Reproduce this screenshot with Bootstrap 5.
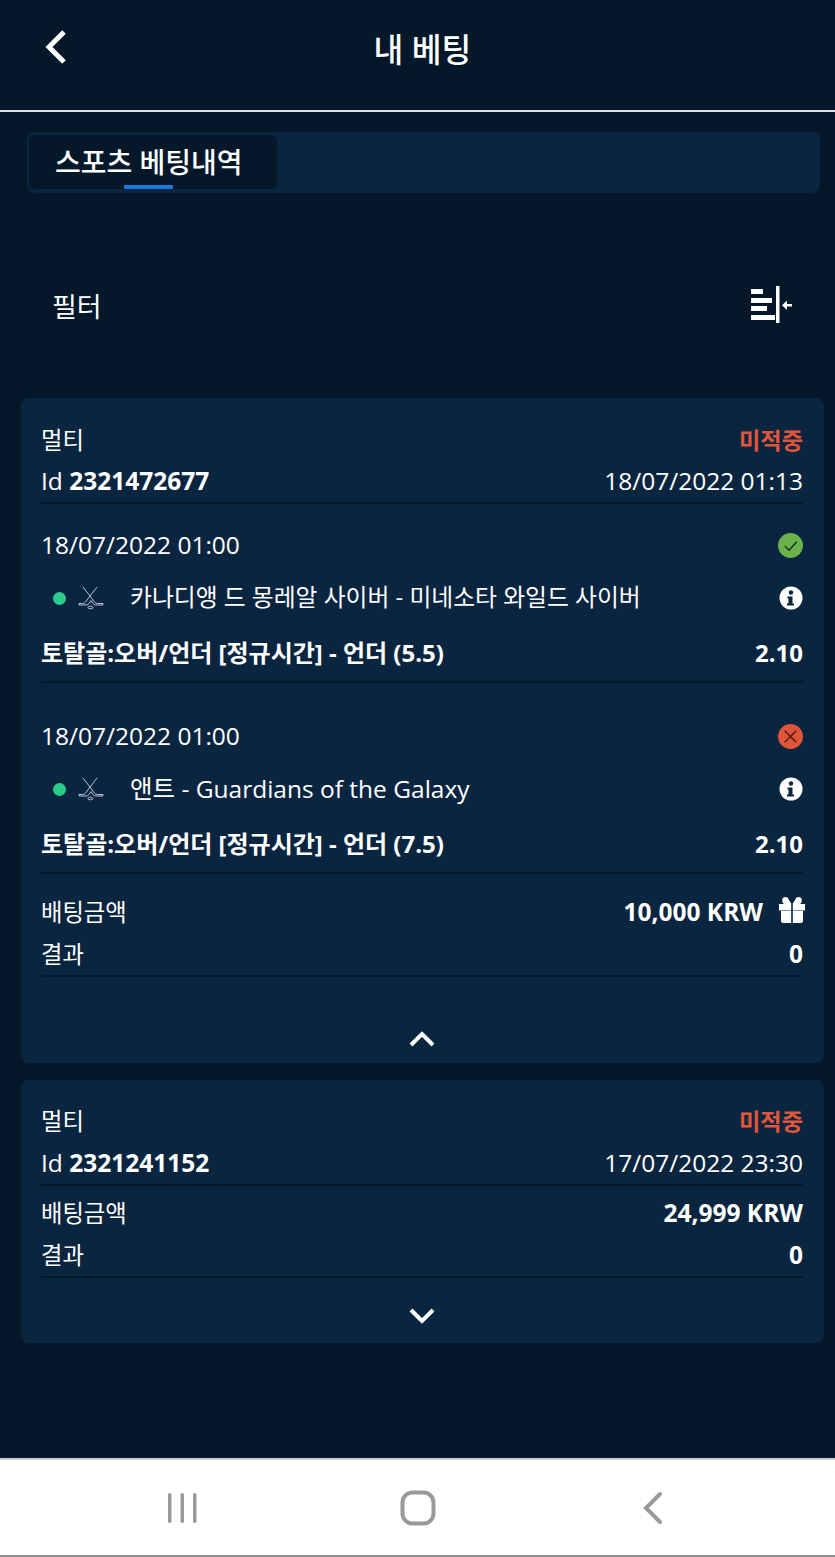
<!DOCTYPE html>
<html lang="ko">
<head>
    <meta charset="UTF-8">
    <meta name="viewport" content="width=device-width, initial-scale=1.0">
    <title>내 베팅</title>
    <link href="https://cdn.jsdelivr.net/npm/bootstrap@5.3.3/dist/css/bootstrap.min.css" rel="stylesheet">
    <script src="https://cdn.jsdelivr.net/npm/bootstrap@5.3.3/dist/js/bootstrap.bundle.min.js"></script>
    <style>
        html, body {
            height: 1557px;
            overflow: hidden;
        }
        body {
            background-color: #05182a;
            color: #fff;
            font-family: "Open Sans", "Noto Sans CJK KR", sans-serif;
            font-size: 24.5px;
            line-height: 1.2;
        }
        .app-screen {
            height: 1458px;
        }
        .top-head {
            height: 112px;
            padding-left: 44px;
            border-bottom: 2px solid #dfe2e5;
        }
        .top-title {
            font-size: 32.4px;
            font-weight: 500;
            left: 10px;
            right: 0;
            top: 30px;
        }
        .tab-strip {
            height: 61px;
            margin: 20px 15px 0 27px;
            padding: 3px 2px;
            background-color: #0a2540;
            border-radius: 8px;
        }
        .tab-active {
            width: 248px;
            height: 54px;
            padding-left: 26px;
            padding-top: 2px;
            font-size: 28px;
            font-weight: 500;
            background-color: #05182a;
            border-radius: 6px;
        }
        .tab-active::after {
            content: "";
            position: absolute;
            left: 95px;
            bottom: 0;
            width: 49px;
            height: 4px;
            background-color: #1379e0;
            border-radius: 1px;
        }
        .filter-line {
            height: 60px;
            margin-top: 83px;
            padding: 2px 43px 0 52px;
            font-size: 27px;
        }
        .filter-icon {
            margin-top: -4px;
        }
        .bet-box {
            margin: 0 11px 17px 21px;
            padding: 21px 21px 0 20px;
            background-color: #0a2540;
            border-radius: 8px;
        }
        .first-box {
            margin-top: 62px;
        }
        .next-box {
            padding-top: 20px;
        }
        .next-box .id-row {
            margin-top: 1px;
        }
        .info-row {
            height: 42px;
        }
        .id-row {
            height: 43px;
            padding-bottom: 2px;
        }
        .result-row {
            height: 44px;
        }
        .rule-row {
            border-bottom: 2px solid #05182a;
        }
        .ko-label {
            padding-top: 2px;
            font-size: 23.3px;
        }
        .lost-text {
            padding-top: 2px;
            color: #e0563b;
            font-weight: 600;
            font-size: 23.2px;
        }
        .leg-date {
            height: 42px;
            margin-top: 20px;
        }
        .leg-date.later-leg {
            margin-top: 32px;
        }
        .leg-match {
            height: 63px;
        }
        .leg-market {
            height: 54px;
            padding-bottom: 4px;
            font-size: 24px;
        }
        .live-dot {
            width: 13px;
            height: 13px;
            margin-top: 2px;
            margin-left: 12px;
            margin-right: 12px;
            background-color: #29cc8b;
            border-radius: 50%;
        }
        .team-text {
            margin-left: 26px;
        }
        .team-ko {
            font-size: 23.8px;
        }
        .sum-first {
            margin-top: 17px;
        }
        .sum-plain {
            margin-top: 6px;
        }
        .gift-mark {
            margin-right: -2px;
        }
        .chevron-big {
            height: 86px;
            padding-bottom: 16px;
        }
        .chevron-small {
            height: 65px;
            padding-top: 11px;
        }
        .soft-nav {
            height: 99px;
            background-color: #fff;
            border-top: 2px solid #c9ced3;
            border-bottom: 2px solid #8f8f8f;
            padding: 0 170px 0 166px;
        }
    </style>
</head>
<body>
    <div class="app-screen">
        <div class="top-head position-relative d-flex align-items-center">
            <svg width="24" height="36" viewBox="0 0 24 36" class="mb-3"><path d="M20 3 5 18l15 15" fill="none" stroke="#fff" stroke-width="5"/></svg>
            <div class="top-title position-absolute text-center">내 베팅</div>
        </div>

        <div class="tab-strip">
            <div class="tab-active position-relative d-flex align-items-center">스포츠 베팅내역</div>
        </div>

        <div class="filter-line d-flex justify-content-between align-items-center">
            <span>필터</span>
            <svg class="filter-icon" width="42" height="38" viewBox="0 0 42 38" fill="#fff">
                <rect x="1" y="3" width="12" height="5"/>
                <rect x="1" y="12" width="21" height="5"/>
                <rect x="1" y="20" width="16" height="5"/>
                <rect x="1" y="29" width="24" height="5"/>
                <rect x="26" y="0" width="3.500" height="37"/>
                <path d="M37 18h5v2.500h-5V24l-5-4.700 5-4.700z"/>
            </svg>
        </div>

        <div id="bet-list"></div>
    </div>

    <div class="soft-nav d-flex justify-content-between align-items-center">
        <svg width="32" height="34" viewBox="0 0 32 34" fill="#999"><rect x="2" y="2" width="3.500" height="30" rx="1.700"/><rect x="14.500" y="2" width="3.500" height="30" rx="1.700"/><rect x="27" y="2" width="3.500" height="30" rx="1.700"/></svg>
        <svg width="36" height="36" viewBox="0 0 36 36"><rect x="2.500" y="2.500" width="31" height="31" rx="10" fill="none" stroke="#999" stroke-width="4"/></svg>
        <svg width="28" height="36" viewBox="0 0 28 36"><path d="M24 4 10 18l14 14" transform="translate(-1 0)" fill="none" stroke="#999" stroke-width="4" stroke-linecap="round"/></svg>
    </div>

    <script>
        const hockey = `<svg width="26" height="24" viewBox="0 0 26 24" fill="none" stroke="#c9d3dc" stroke-width=".9"><path d="M5 1 16.500 16q1 1.500 3 1.500H25v1.500h-7q-2 0-3-1.500L13 14.500"/><path d="M19 1 7.500 16q-1 1.500-3 1.500H1V19h7q2 0 3-1.500l2-3"/><ellipse cx="12.500" cy="21.500" rx="2.500" ry="1.300"/></svg>`;
        const infoIcon = `<svg width="24" height="24" viewBox="0 0 24 24"><circle cx="12" cy="12" r="11.500" fill="#fff"/><circle cx="12" cy="6.500" r="2.200" fill="#0a2540"/><path d="M8.500 10.500h5v7h1.500v2h-7v-2h1.500v-5h-1z" fill="#0a2540"/></svg>`;
        const okIcon = `<svg width="25" height="25" viewBox="0 0 26 26"><circle cx="13" cy="13" r="13" fill="#6cb24a"/><path d="M7 13.500l4.500 4.500 8-9" fill="none" stroke="#14331f" stroke-width="1.500"/></svg>`;
        const badIcon = `<svg width="25" height="25" viewBox="0 0 26 26"><circle cx="13" cy="13" r="13" fill="#e0563b"/><path d="M7 7l12 12M19 7 7 19" fill="none" stroke="#4a1a14" stroke-width="1.500"/></svg>`;
        const giftIcon = `<svg class="gift-mark mb-1" width="26" height="28" viewBox="0 0 26 28" fill="#fff"><path d="M0 8h12.200v6.500H0zM13.800 8H26v6.500H13.800zM2 15h10.200v12H4a2 2 0 0 1-2-2zM13.800 15H24v10a2 2 0 0 1-2 2h-8.200z"/><path d="M12.500 8 8.500 1.500Q5 0 3.500 2.500 2.500 6 5 8zM13.500 8l4-6.500q3.500-1.500 5 1 1 3.500-1.500 5.500z"/></svg>`;
        const upIcon = `<svg width="26" height="16" viewBox="0 0 26 16"><path d="M2 14 13 3l11 11" fill="none" stroke="#fff" stroke-width="4"/></svg>`;
        const downIcon = `<svg width="26" height="16" viewBox="0 0 26 16"><path d="M2 2l11 11L24 2" fill="none" stroke="#fff" stroke-width="4"/></svg>`;

        const bets = [
            {
                id: '2321472677', when: '18/07/2022 01:13', stake: '10,000 KRW', gift: true, open: true,
                legs: [
                    { date: '18/07/2022 01:00', status: okIcon, match: '카나디앵 드 몽레알 사이버 - 미네소타 와일드 사이버', allKo: true, market: '토탈골:오버/언더 [정규시간] - 언더 (5.5)', odds: '2.10' },
                    { date: '18/07/2022 01:00', status: badIcon, match: '앤트 - Guardians of the Galaxy', allKo: false, market: '토탈골:오버/언더 [정규시간] - 언더 (7.5)', odds: '2.10' }
                ]
            },
            { id: '2321241152', when: '17/07/2022 23:30', stake: '24,999 KRW', gift: false, open: false, legs: [] }
        ];

        function legHtml(leg, i) {
            return `
                <div class="leg-date ${i > 0 ? 'later-leg' : ''} d-flex justify-content-between align-items-center">
                    <span>${leg.date}</span>${leg.status}
                </div>
                <div class="leg-match d-flex align-items-center">
                    <span class="live-dot"></span>${hockey}
                    <span class="team-text flex-grow-1 ${leg.allKo ? 'team-ko' : ''}">${leg.match}</span>${infoIcon}
                </div>
                <div class="leg-market rule-row d-flex justify-content-between align-items-center fw-bold">
                    <span>${leg.market}</span><span>${leg.odds}</span>
                </div>`;
        }

        function betHtml(bet, i) {
            return `
                <div class="bet-box ${i === 0 ? 'first-box' : 'next-box'}">
                    <div class="info-row d-flex justify-content-between align-items-center">
                        <span class="ko-label">멀티</span><span class="lost-text">미적중</span>
                    </div>
                    <div class="info-row id-row rule-row d-flex justify-content-between align-items-center">
                        <span>Id <b>${bet.id}</b></span><span>${bet.when}</span>
                    </div>
                    ${bet.legs.map(legHtml).join('')}
                    <div class="info-row ${bet.open ? 'sum-first' : 'sum-plain'} d-flex justify-content-between align-items-center">
                        <span class="ko-label">배팅금액</span>
                        <span class="d-flex align-items-center gap-3 fw-bold">${bet.stake}${bet.gift ? giftIcon : ''}</span>
                    </div>
                    <div class="info-row result-row rule-row d-flex justify-content-between align-items-center">
                        <span class="ko-label">결과</span><b>0</b>
                    </div>
                    <div class="${bet.open ? 'chevron-big' : 'chevron-small'} d-flex justify-content-center align-items-${bet.open ? 'end' : 'center'}">
                        ${bet.open ? upIcon : downIcon}
                    </div>
                </div>`;
        }

        document.getElementById('bet-list').innerHTML = bets.map(betHtml).join('');
    </script>
</body>
</html>
